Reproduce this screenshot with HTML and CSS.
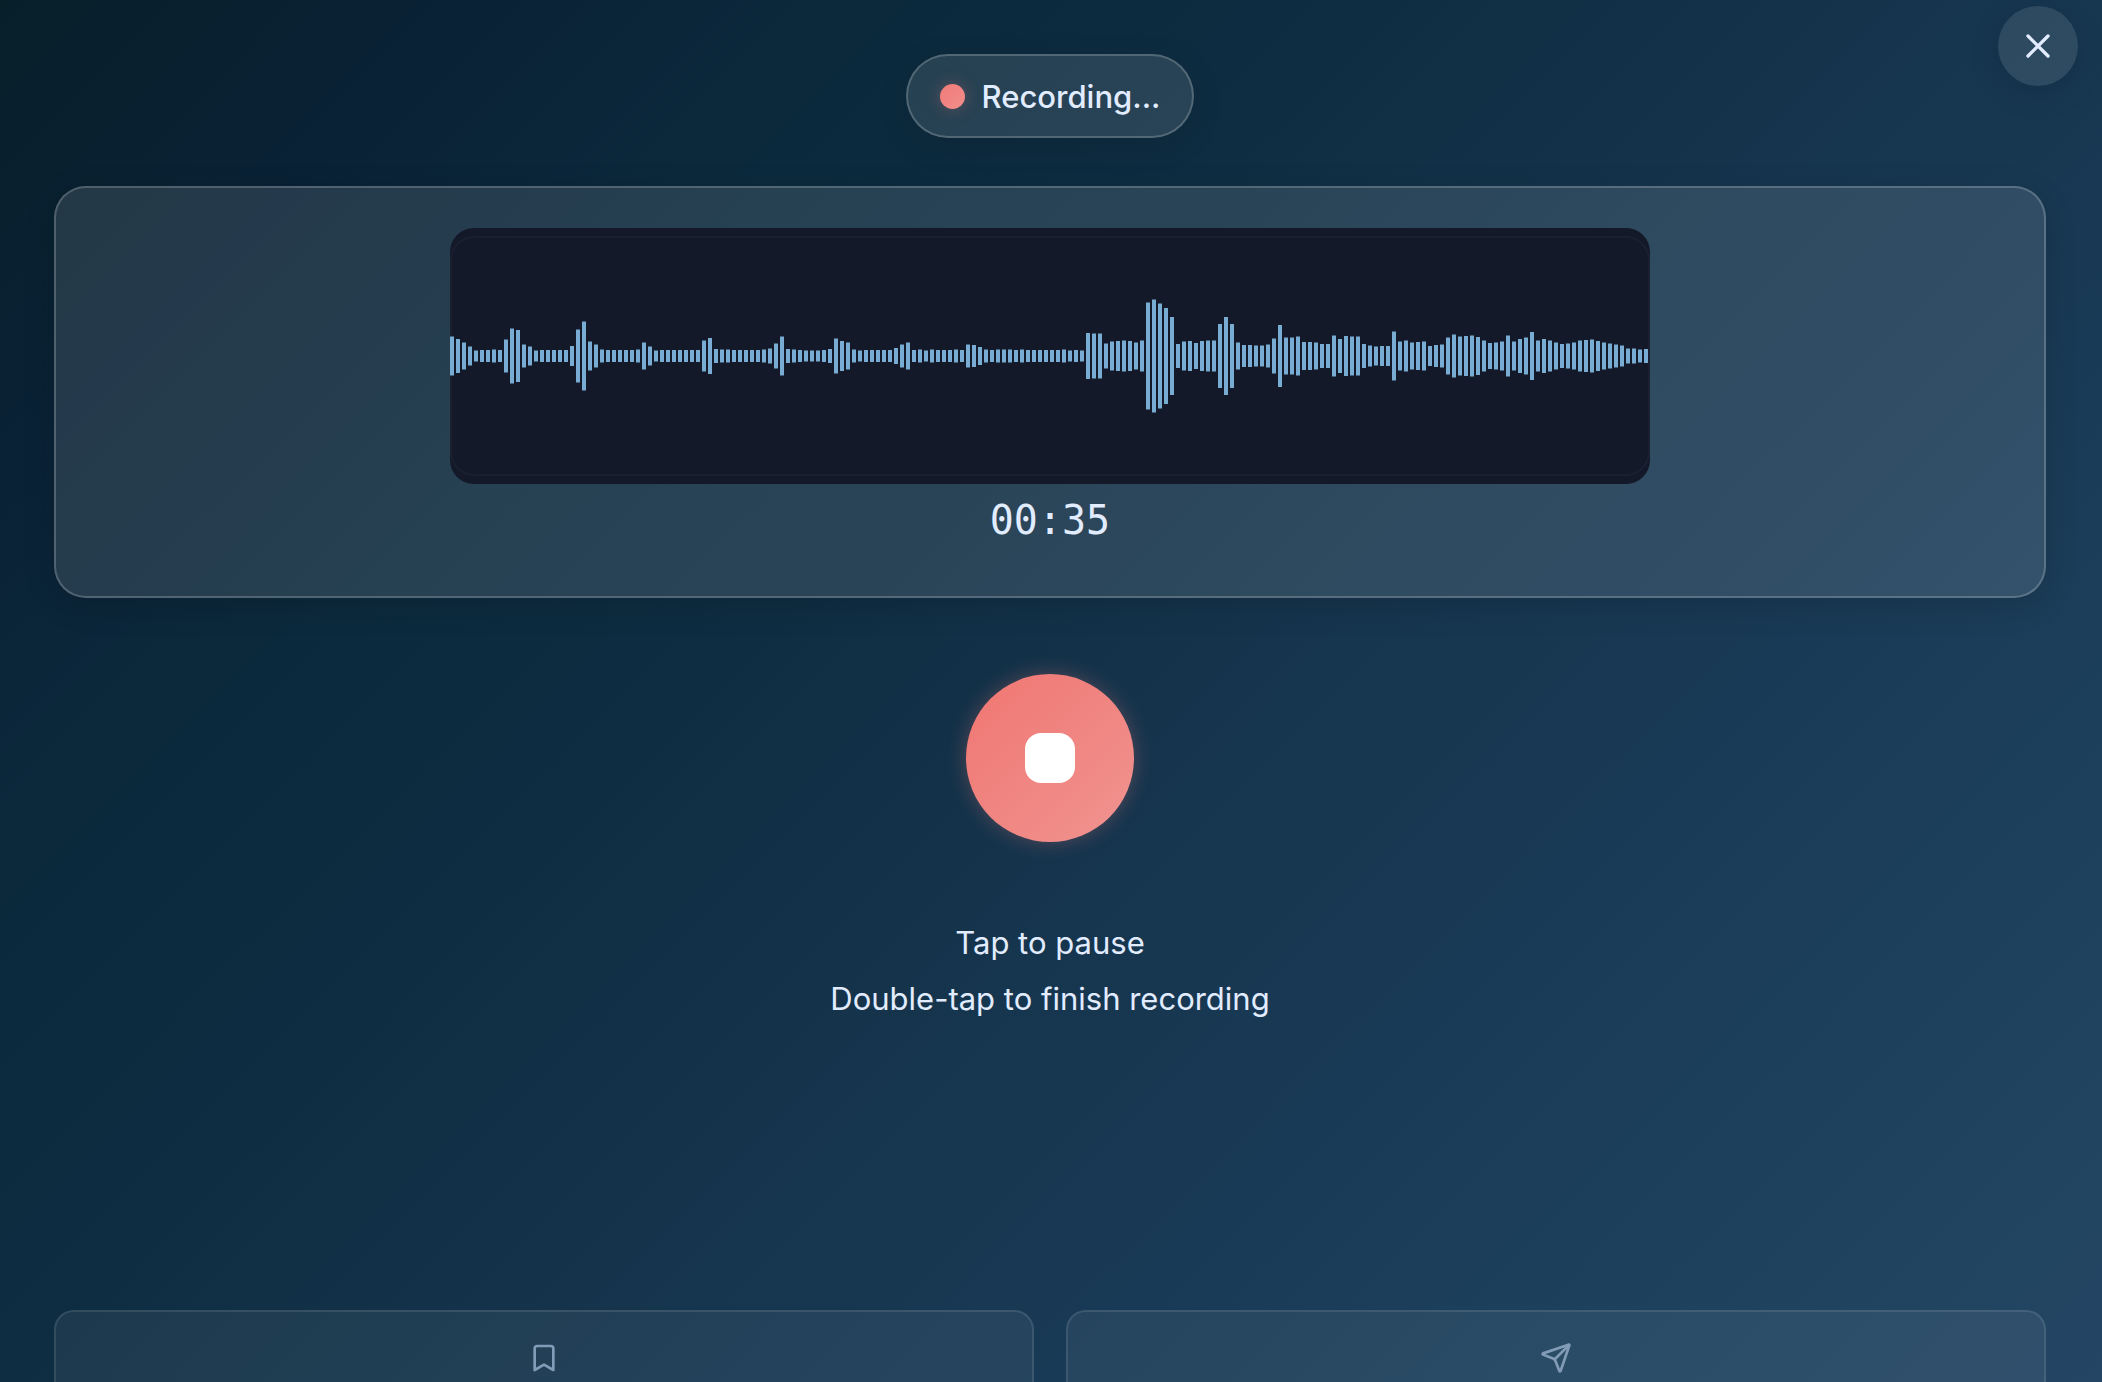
FILE: index.html
```html
<!DOCTYPE html>
<html lang="en">
<head>
  <meta charset="utf-8">
  <meta name="viewport" content="width=device-width, initial-scale=1">
  <title>Recording</title>
  <link rel="stylesheet" href="styles.css">
</head>
<body>
  <main class="recorder">
    <button class="close" type="button" aria-label="Close">
      <svg class="close-icon" viewBox="0 0 24 24" aria-hidden="true"><path d="M18 6 6 18M6 6l12 12"/></svg>
    </button>

    <div class="status" role="status">
      <span class="status-dot"></span>
      <span>Recording...</span>
    </div>

    <section class="panel" aria-label="Waveform">
      <div class="wave-box">
        <svg class="wave" viewBox="0 0 1200 240" aria-hidden="true"><path id="bars"/></svg>
      </div>
      <time class="timer">00:35</time>
    </section>

    <button class="record" type="button" aria-label="Pause recording">
      <span class="record-stop"></span>
    </button>

    <div class="hint">
      <p>Tap to pause</p>
      <p>Double-tap to finish recording</p>
    </div>

    <div class="actions">
      <button class="action" type="button" aria-label="Save">
        <svg class="action-icon" viewBox="0 0 24 24" aria-hidden="true"><path d="m19 21-7-4-7 4V5a2 2 0 0 1 2-2h10a2 2 0 0 1 2 2z"/></svg>
      </button>
      <button class="action" type="button" aria-label="Send">
        <svg class="action-icon" viewBox="0 0 24 24" aria-hidden="true"><path d="M14.536 21.686a.5.5 0 0 0 .937-.024l6.5-19a.496.496 0 0 0-.635-.635l-19 6.5a.5.5 0 0 0-.024.937l7.93 3.18a2 2 0 0 1 1.112 1.11z"/><path d="m21.854 2.147-10.94 10.939"/></svg>
      </button>
    </div>
  </main>
  <script src="wave.js"></script>
</body>
</html>
```
FILE: styles.css
```css
* {
  box-sizing: border-box;
}

body {
  margin: 0;
  color: #e2ecff;
  font-family: Inter, "Liberation Sans", sans-serif;
}

button {
  padding: 0;
  border: 0;
  color: inherit;
  font: inherit;
  cursor: pointer;
}

svg {
  display: block;
  fill: none;
  stroke: currentColor;
  stroke-width: 2;
  stroke-linecap: round;
  stroke-linejoin: round;
}

.recorder {
  position: relative;
  display: flex;
  flex-direction: column;
  align-items: center;
  height: 100vh;
  padding: 54px 56px 0 54px;
  overflow: hidden;
  background: linear-gradient(135deg, #071f29 0%, #0a2236 14%, #0c2a3d 28%, #0f2d42 40%, #15344c 54%, #193a56 70%, #1e425e 86%, #244664 100%);
}

.recorder > * {
  flex-shrink: 0;
}

.close {
  position: absolute;
  top: 6px;
  right: 24px;
  display: grid;
  place-items: center;
  width: 80px;
  height: 80px;
  border-radius: 50%;
  background: rgba(255, 255, 255, 0.1);
  box-shadow: 0 8px 32px rgba(0, 0, 0, 0.12);
}

.close-icon {
  width: 40px;
  height: 40px;
}

.status {
  display: flex;
  align-items: center;
  gap: 17px;
  height: 84px;
  padding: 0 32px;
  border: 2px solid rgba(255, 255, 255, 0.2);
  border-radius: 42px;
  background: rgba(255, 255, 255, 0.11);
  box-shadow: 0 8px 32px rgba(0, 0, 0, 0.12);
  font-size: 31px;
  font-weight: 500;
}

.status-dot {
  width: 25px;
  height: 25px;
  border-radius: 50%;
  background: linear-gradient(135deg, #f07a78, #f28f8c);
  box-shadow: 0 0 16px rgba(240, 122, 120, 0.3);
}

.panel {
  display: flex;
  flex-direction: column;
  align-items: center;
  width: 100%;
  margin-top: 48px;
  padding: 40px;
  border: 2px solid rgba(255, 255, 255, 0.2);
  border-radius: 32px;
  background: rgba(255, 255, 255, 0.11);
  box-shadow: 0 8px 32px rgba(0, 0, 0, 0.14);
}

.wave-box {
  width: 100%;
  max-width: 1200px;
  padding: 8px 0;
  border-radius: 24px;
  background: #131929;
}

.wave {
  width: 100%;
  border-radius: 24px;
  box-shadow: inset 0 0 0 2px rgba(255, 255, 255, 0.03);
  fill: #78acd2;
  stroke: none;
}

.timer {
  margin: 12px 0;
  font-family: "DejaVu Sans Mono", monospace;
  font-size: 40px;
  line-height: 48px;
}

.record {
  display: grid;
  place-items: center;
  width: 168px;
  height: 168px;
  margin-top: 76px;
  border-radius: 50%;
  background: linear-gradient(135deg, #f07672, #f09490);
  box-shadow: 0 0 20px rgba(240, 122, 120, 0.3);
}

.record-stop {
  width: 50px;
  height: 50px;
  border-radius: 16px;
  background: #fff;
}

.hint {
  margin-top: 73px;
  font-size: 31px;
  line-height: 56px;
  text-align: center;
}

.hint p {
  margin: 0;
}

.actions {
  display: grid;
  grid-template-columns: 1fr 1fr;
  gap: 32px;
  width: 100%;
  margin-top: 283px;
}

.action {
  display: flex;
  justify-content: center;
  height: 144px;
  padding-top: 30px;
  border: 2px solid rgba(255, 255, 255, 0.1);
  border-radius: 20px;
  background: rgba(255, 255, 255, 0.06);
  color: #829cb8;
}

.action-icon {
  width: 32px;
  height: 32px;
}
```
FILE: wave.js
```js
// Height of each waveform bar, in viewBox units, oldest sample first.
const levels = [
  39, 34, 27, 19, 11, 12, 12, 13, 12, 33, 55, 52, 23, 19, 11, 12, 12, 12, 12, 12,
  20, 53, 69, 29, 23, 13, 12, 12, 12, 12, 12, 13, 27, 19, 11, 12, 12, 12, 12, 12,
  12, 12, 31, 36, 14, 13, 13, 12, 12, 12, 12, 12, 13, 15, 25, 39, 14, 13, 12, 11,
  11, 11, 12, 14, 35, 30, 27, 13, 11, 12, 12, 12, 12, 12, 16, 23, 27, 12, 13, 11,
  13, 12, 12, 12, 13, 12, 23, 22, 18, 13, 12, 13, 13, 13, 12, 13, 12, 12, 12, 12,
  12, 12, 13, 11, 12, 11, 46, 45, 45, 25, 29, 30, 31, 30, 27, 31, 107, 113, 105, 96,
  78, 24, 29, 30, 26, 30, 31, 31, 64, 78, 64, 27, 22, 22, 21, 21, 23, 35, 62, 37,
  37, 39, 28, 28, 27, 24, 24, 41, 34, 40, 39, 39, 24, 21, 19, 20, 20, 49, 29, 31,
  27, 28, 29, 20, 22, 23, 37, 43, 39, 40, 41, 38, 31, 26, 27, 29, 41, 29, 34, 37,
  48, 31, 34, 31, 27, 24, 25, 27, 31, 32, 33, 30, 27, 25, 23, 21, 15, 15, 13, 14
];

const step = 6;
const barWidth = 4;
const middle = 120;

document.getElementById("bars").setAttribute("d", levels
  .map((h, i) => `M${i * step} ${middle - h / 2}h${barWidth}v${h}h-${barWidth}z`)
  .join(""));
```
